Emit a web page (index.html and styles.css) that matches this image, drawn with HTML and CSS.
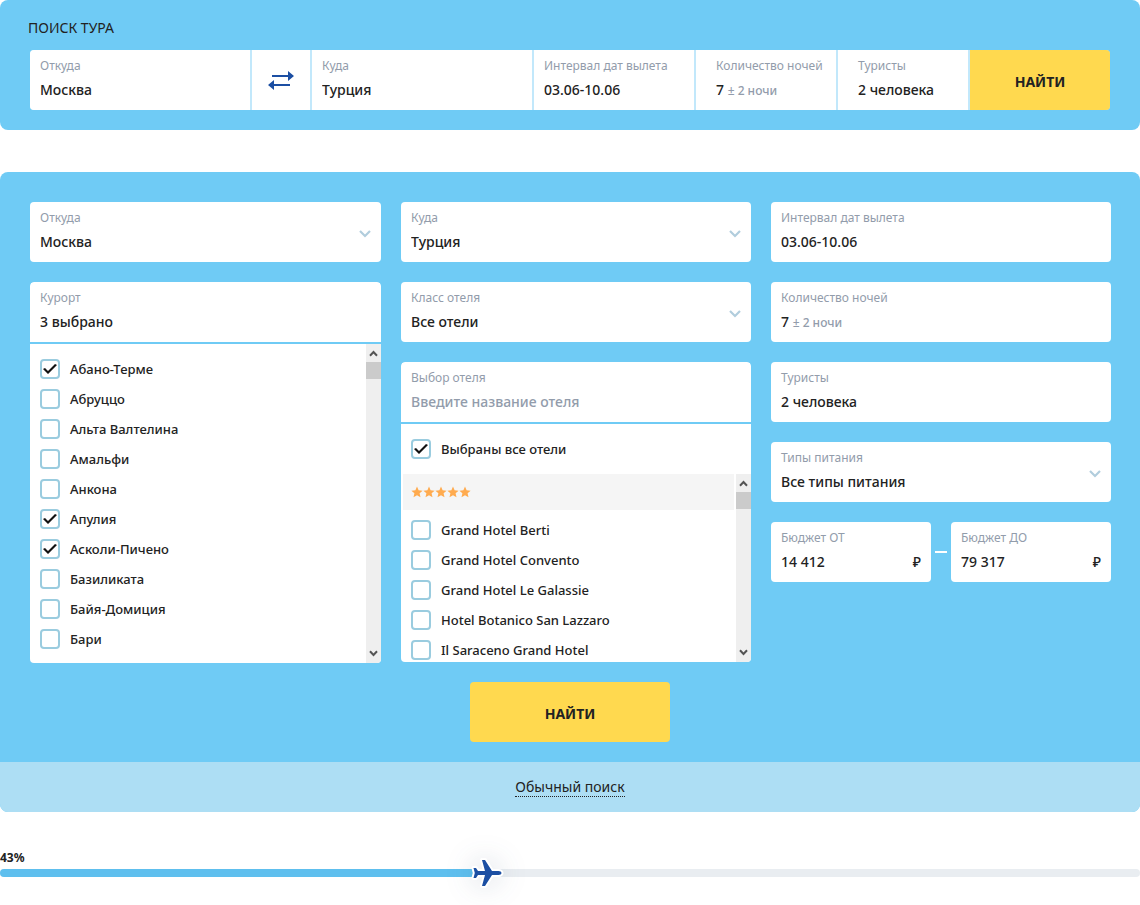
FILE: index.html
```html
<!DOCTYPE html>
<html lang="ru">
<head>
<meta charset="utf-8">
<meta name="viewport" content="width=device-width, initial-scale=1">
<title>Поиск тура</title>
<link rel="stylesheet" href="styles.css">
</head>
<body>
<svg class="sprite" aria-hidden="true">
  <symbol id="chevron" viewBox="0 0 12 8"><path d="M1 1 6 6 11 1" fill="none" stroke="#b1cddd" stroke-width="2.200"/></symbol>
  <symbol id="arrow-up" viewBox="0 0 9 7"><path d="M1 5.8 4.5 2 8 5.8" fill="none" stroke="#555" stroke-width="2"/></symbol>
  <symbol id="arrow-down" viewBox="0 0 9 7"><path d="M1 1.2 4.5 5 8 1.2" fill="none" stroke="#555" stroke-width="2"/></symbol>
  <symbol id="star" viewBox="0 0 12 12"><path d="M6 .6 7.6 4.3 11.6 4.7 8.6 7.3 9.5 11.3 6 9.2 2.5 11.3 3.4 7.3.4 4.7 4.4 4.3z" fill="#ffab4f"/></symbol>
</svg>

<form class="panel quick">
  <h1 class="title">ПОИСК ТУРА</h1>
  <div class="bar">
    <div class="field">
      <label for="q-from">Откуда</label>
      <input id="q-from" type="text" value="Москва">
    </div>
    <button class="swap" type="button" aria-label="Поменять местами">
      <svg width="28" height="20" viewBox="0 0 28 20" fill="#1c4fa3"><path d="M5 4h16V0l6 5-6 5V6H5zM23 13H7V9L1 14l6 5v-4h16z"/></svg>
    </button>
    <div class="field">
      <label for="q-to">Куда</label>
      <input id="q-to" type="text" value="Турция">
    </div>
    <div class="field">
      <label for="q-dates">Интервал дат вылета</label>
      <input id="q-dates" type="text" value="03.06-10.06">
    </div>
    <div class="field wide">
      <label for="q-nights">Количество ночей</label>
      <button id="q-nights" class="value" type="button">7 <small>± 2 ночи</small></button>
    </div>
    <div class="field wide">
      <label for="q-people">Туристы</label>
      <input id="q-people" type="text" value="2 человека">
    </div>
    <button class="submit" type="submit">НАЙТИ</button>
  </div>
</form>

<form class="panel full">
  <div class="columns">
    <div class="column">
      <div class="field select">
        <label for="from">Откуда</label>
        <select id="from"><option>Москва</option></select>
        <svg class="chevron"><use href="#chevron"/></svg>
      </div>
      <div class="dropdown">
        <div class="field">
          <label for="resort">Курорт</label>
          <input id="resort" type="text" value="3 выбрано">
        </div>
        <div class="scroller">
          <div class="options resorts">
            <label class="option"><input type="checkbox" checked>Абано-Терме</label>
            <label class="option"><input type="checkbox">Абруццо</label>
            <label class="option"><input type="checkbox">Альта Валтелина</label>
            <label class="option"><input type="checkbox">Амальфи</label>
            <label class="option"><input type="checkbox">Анкона</label>
            <label class="option"><input type="checkbox" checked>Апулия</label>
            <label class="option"><input type="checkbox" checked>Асколи-Пичено</label>
            <label class="option"><input type="checkbox">Базиликата</label>
            <label class="option"><input type="checkbox">Байя-Домиция</label>
            <label class="option"><input type="checkbox">Бари</label>
          </div>
          <div class="scrollbar" aria-hidden="true">
            <svg class="arrow"><use href="#arrow-up"/></svg>
            <span class="thumb"></span>
            <svg class="arrow last"><use href="#arrow-down"/></svg>
          </div>
        </div>
      </div>
    </div>

    <div class="column">
      <div class="field select">
        <label for="to">Куда</label>
        <select id="to"><option>Турция</option></select>
        <svg class="chevron"><use href="#chevron"/></svg>
      </div>
      <div class="field select">
        <label for="class">Класс отеля</label>
        <select id="class"><option>Все отели</option></select>
        <svg class="chevron"><use href="#chevron"/></svg>
      </div>
      <div class="dropdown">
        <div class="field">
          <label for="hotel">Выбор отеля</label>
          <input id="hotel" type="text" placeholder="Введите название отеля">
        </div>
        <div class="all">
          <label class="option"><input type="checkbox" checked>Выбраны все отели</label>
        </div>
        <div class="scroller hotels">
          <div class="options">
            <div class="stars" role="img" aria-label="5 звёзд">
              <svg><use href="#star"/></svg><svg><use href="#star"/></svg><svg><use href="#star"/></svg><svg><use href="#star"/></svg><svg><use href="#star"/></svg>
            </div>
            <label class="option"><input type="checkbox">Grand Hotel Berti</label>
            <label class="option"><input type="checkbox">Grand Hotel Convento</label>
            <label class="option"><input type="checkbox">Grand Hotel Le Galassie</label>
            <label class="option"><input type="checkbox">Hotel Botanico San Lazzaro</label>
            <label class="option"><input type="checkbox">Il Saraceno Grand Hotel</label>
          </div>
          <div class="scrollbar" aria-hidden="true">
            <svg class="arrow"><use href="#arrow-up"/></svg>
            <span class="thumb"></span>
            <svg class="arrow last"><use href="#arrow-down"/></svg>
          </div>
        </div>
      </div>
    </div>

    <div class="column">
      <div class="field">
        <label for="dates">Интервал дат вылета</label>
        <input id="dates" type="text" value="03.06-10.06">
      </div>
      <div class="field">
        <label for="nights">Количество ночей</label>
        <button id="nights" class="value" type="button">7 <small>± 2 ночи</small></button>
      </div>
      <div class="field">
        <label for="people">Туристы</label>
        <input id="people" type="text" value="2 человека">
      </div>
      <div class="field select">
        <label for="food">Типы питания</label>
        <select id="food"><option>Все типы питания</option></select>
        <svg class="chevron"><use href="#chevron"/></svg>
      </div>
      <div class="budget">
        <div class="field">
          <label for="min">Бюджет ОТ</label>
          <div class="money"><input id="min" type="text" value="14 412"><span>₽</span></div>
        </div>
        <span class="dash"></span>
        <div class="field">
          <label for="max">Бюджет ДО</label>
          <div class="money"><input id="max" type="text" value="79 317"><span>₽</span></div>
        </div>
      </div>
    </div>
  </div>
  <button class="submit center" type="submit">НАЙТИ</button>
  <div class="footer"><a href="#">Обычный поиск</a></div>
</form>

<div class="progress" role="progressbar" aria-label="Поиск" aria-valuenow="43" aria-valuemin="0" aria-valuemax="100">
  <span class="percent">43%</span>
  <div class="track">
    <div class="fill" style="width:43%">
      <svg class="plane" viewBox="0 0 32 32"><path d="M11 3h3l7 11h6.500c1.700 0 3 .9 3 2s-1.300 2-3 2H21l-7 11h-3l3-11H7l-2 3H2.500l1.300-5-1.300-5H5l2 3h7z" fill="#1c4fa3" stroke="#fff" stroke-width="4" stroke-linejoin="round" paint-order="stroke"/></svg>
    </div>
  </div>
</div>
</body>
</html>
```
FILE: styles.css
```css
*,
*::before,
*::after {
  box-sizing: border-box;
}

body {
  margin: 0;
  background: #fff;
  color: #222;
  font: 500 14px/20px "Noto Sans", "Open Sans", sans-serif;
}

button,
input,
select {
  margin: 0;
  padding: 0;
  border: 0;
  background: none;
  color: inherit;
  font: inherit;
  appearance: none;
}

.sprite {
  display: none;
}

.panel {
  border-radius: 8px;
  background: #6fcbf5;
  overflow: hidden;
}

.quick {
  padding: 18px 30px 20px;
}

.title {
  margin: 0 -2px 12px;
  font-size: 14px;
  font-weight: 400;
  line-height: 20px;
}

.bar {
  display: grid;
  grid-template-columns: 220fr 58px 220fr 160fr 140fr 130fr 140fr;
  gap: 2px;
  border-radius: 4px;
  background: #c2e8fb;
  overflow: hidden;
}

.bar .field {
  border-radius: 0;
}

.swap {
  display: flex;
  align-items: center;
  justify-content: center;
  padding-top: 2px;
  background: #fff;
}

.field {
  position: relative;
  display: flex;
  flex-direction: column;
  gap: 4px;
  min-width: 0;
  height: 60px;
  padding: 8px 10px;
  border-radius: 4px;
  background: #fff;
}

.field.wide {
  padding: 8px 0 8px 20px;
}

.field label {
  color: #929cab;
  font-size: 12px;
  font-weight: 400;
  line-height: 16px;
  white-space: nowrap;
}

.field input,
.field select,
.value {
  width: 100%;
  min-width: 0;
  height: 24px;
  line-height: 24px;
  text-align: left;
}

.field input::placeholder {
  color: #929cab;
  opacity: 1;
}

.value small {
  color: #929cab;
  font-size: 12px;
}

.chevron {
  position: absolute;
  top: 28px;
  right: 10px;
  width: 12px;
  height: 8px;
  pointer-events: none;
}

.submit {
  height: 60px;
  padding-top: 4px;
  background: #ffd94f;
  font-weight: 700;
}

.full {
  margin-top: 42px;
}

.columns {
  display: grid;
  grid-template-columns: 351fr 350fr 340fr;
  gap: 20px;
  align-items: start;
  padding: 30px 29px 19px 30px;
}

.column {
  display: flex;
  flex-direction: column;
  gap: 20px;
  min-width: 0;
}

.dropdown {
  border-radius: 4px;
  overflow: hidden;
}

.dropdown .field {
  margin-bottom: 2px;
  border-radius: 4px 4px 0 0;
}

.scroller {
  display: flex;
  background: #fff;
}

.options {
  flex: 1;
  min-width: 0;
}

.resorts {
  padding: 10px 0 9px;
}

.hotels {
  height: 188px;
  overflow: hidden;
}

.option {
  display: flex;
  align-items: center;
  gap: 10px;
  height: 30px;
  padding: 0 10px;
  font-size: 13px;
}

.option input {
  flex: none;
  display: grid;
  place-items: center;
  width: 20px;
  height: 20px;
  border: 2px solid #9accdf;
  border-radius: 4px;
  background: #fff;
}

.option input:checked::after {
  content: "";
  width: 14px;
  height: 12px;
  background: #111;
  clip-path: polygon(0 6px, 2px 5px, 5px 8px, 12px 1px, 14px 2px, 5px 11px);
}

.all {
  padding: 10px 0;
  background: #fff;
}

.stars {
  display: flex;
  height: 36px;
  align-items: center;
  margin: 0 2px 5px;
  padding: 0 8px;
  background: #f5f5f5;
}

.stars svg {
  width: 12px;
  height: 12px;
}

.scrollbar {
  display: flex;
  flex-direction: column;
  align-items: center;
  width: 15px;
  background: #efefef;
}

.arrow {
  width: 9px;
  height: 7px;
  margin: 6px 0 5px;
}

.arrow.last {
  margin: auto 0 6px;
}

.thumb {
  width: 100%;
  height: 17px;
  background: #cbcbcb;
}

.budget {
  display: grid;
  grid-template-columns: 1fr 12px 1fr;
  gap: 4px;
  align-items: center;
}

.dash {
  height: 2px;
  background: #fff;
}

.money {
  display: flex;
  line-height: 24px;
}

.center {
  display: block;
  width: 200px;
  margin: 0 auto 20px;
  border-radius: 4px;
}

.footer {
  display: flex;
  align-items: center;
  justify-content: center;
  height: 50px;
  background: #addef4;
  font-weight: 400;
}

.footer a {
  border-bottom: 1px dotted #222;
  color: inherit;
  line-height: 18px;
  text-decoration: none;
}

.progress {
  padding: 38px 0 28px;
  overflow: hidden;
}

.percent {
  display: block;
  margin-bottom: 3px;
  font-size: 12px;
  font-weight: 700;
  line-height: 16px;
}

.track {
  height: 8px;
  border-radius: 4px;
  background: #e9edf1;
}

.fill {
  position: relative;
  height: 8px;
  border-radius: 4px;
  background: #5ebfee;
}

.plane {
  position: absolute;
  top: -12px;
  right: -13px;
  width: 32px;
  height: 32px;
  overflow: visible;
  filter: drop-shadow(0 0 14px rgba(40, 60, 100, 0.2));
}
```
